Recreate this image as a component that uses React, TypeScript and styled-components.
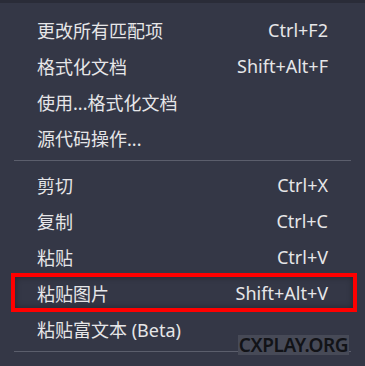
import React from "react";
import styled, { createGlobalStyle } from "styled-components";

const GlobalStyle = createGlobalStyle`
  html, body {
    margin: 0;
    padding: 0;
    background: #343746;
  }
  body {
    font-family: "Noto Sans", "Noto Sans CJK SC", sans-serif;
  }
`;

type Item = { label: string; shortcut?: string; marked?: boolean };

const groupOne: Item[] = [
  { label: "更改所有匹配项", shortcut: "Ctrl+F2" },
  { label: "格式化文档", shortcut: "Shift+Alt+F" },
  { label: "使用...格式化文档" },
  { label: "源代码操作..." },
];

const groupTwo: Item[] = [
  { label: "剪切", shortcut: "Ctrl+X" },
  { label: "复制", shortcut: "Ctrl+C" },
  { label: "粘贴", shortcut: "Ctrl+V" },
  { label: "粘贴图片", shortcut: "Shift+Alt+V", marked: true },
  { label: "粘贴富文本 (Beta)" },
];

function App() {
  return (
    <>
      <GlobalStyle />
      <Page>
        <TopBar />
        <Menu>
          {groupOne.map((item) => (
            <Row key={item.label} $marked={item.marked}>
              <Label>{item.label}</Label>
              {item.shortcut && <Shortcut>{item.shortcut}</Shortcut>}
            </Row>
          ))}
          <Separator />
          {groupTwo.map((item) => (
            <Row key={item.label} $marked={item.marked}>
              <Label>{item.label}</Label>
              {item.shortcut && <Shortcut>{item.shortcut}</Shortcut>}
            </Row>
          ))}
          <Separator />
        </Menu>
        <Watermark>CXPLAY.ORG</Watermark>
      </Page>
    </>
  );
}

export default App;

const Page = styled.div`
  position: relative;
  width: 365px;
  height: 366px;
  overflow: hidden;
  background: #343746;
`;

const TopBar = styled.div`
  height: 3px;
  background: #2a2c38;
`;

const Menu = styled.div`
  display: flex;
  flex-direction: column;
  padding: 9px 14px 0;
`;

const Row = styled.div<{ $marked?: boolean }>`
  position: relative;
  height: 36px;
  display: flex;
  align-items: center;
  justify-content: space-between;
  padding: 0 23px;
  color: #e6e6e8;
  font-size: 18px;

  ${({ $marked }) =>
    $marked &&
    `
    &::after {
      content: "";
      position: absolute;
      left: -3px;
      right: -6px;
      top: -2px;
      bottom: -1px;
      border: 4px solid #ff0000;
      box-shadow: inset 0 0 6px rgba(0, 0, 0, 0.35);
    }
  `}
`;

const Label = styled.span`
  white-space: nowrap;
`;

const Shortcut = styled.span`
  white-space: nowrap;
`;

const Separator = styled.div`
  height: 1px;
  background: #5b5e6c;
  margin: 4px 0 6px;
`;

const Watermark = styled.div`
  position: absolute;
  left: 238px;
  top: 335px;
  width: 111px;
  height: 20px;
  display: flex;
  align-items: center;
  justify-content: center;
  background: #474a57;
  color: #121317;
  font-family: "Noto Sans", sans-serif;
  font-size: 19px;
  font-weight: 600;
  letter-spacing: -0.4px;
`;
